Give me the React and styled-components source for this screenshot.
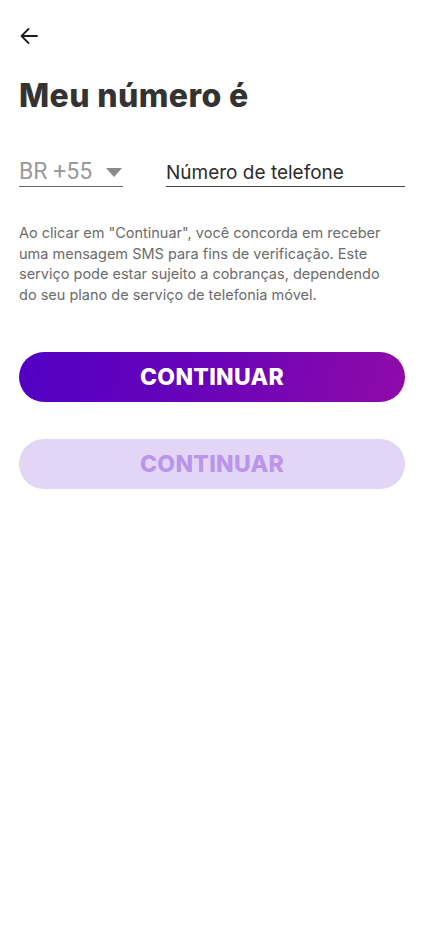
import styled, { createGlobalStyle } from "styled-components";

const GlobalStyle = createGlobalStyle`
  body {
    margin: 0;
    background: #ffffff;
    font-family: "Inter", "Lato", sans-serif;
  }
`;

export default function App() {
  return (
    <>
      <GlobalStyle />
      <Page>
        <BackButton type="button" aria-label="Voltar">
          <svg width="20" height="20" viewBox="0 0 20 20" fill="none">
            <path
              d="M18 10H2.5M9.5 3L2.5 10L9.5 17"
              stroke="#1f1f1f"
              strokeWidth="1.8"
              strokeLinecap="round"
              strokeLinejoin="round"
            />
          </svg>
        </BackButton>
        <Title>Meu número é</Title>
        <InputRow>
          <CountrySelect>
            <CountryText>BR +55</CountryText>
            <Caret />
          </CountrySelect>
          <PhoneField>Número de telefone</PhoneField>
        </InputRow>
        <Notice>
          Ao clicar em "Continuar", você concorda em receber uma mensagem SMS
          para fins de verificação. Este serviço pode estar sujeito a
          cobranças, dependendo do seu plano de serviço de telefonia móvel.
        </Notice>
        <Buttons>
          <ContinueButton type="button">CONTINUAR</ContinueButton>
          <ContinueButton type="button" $disabled>
            CONTINUAR
          </ContinueButton>
        </Buttons>
      </Page>
    </>
  );
}

const Page = styled.div`
  min-height: 932px;
  padding: 26px 25px 0 19px;
  box-sizing: border-box;
  display: flex;
  flex-direction: column;
`;

const BackButton = styled.button`
  border: none;
  background: none;
  padding: 0;
  width: 20px;
  height: 20px;
  display: flex;
  cursor: pointer;
`;

const Title = styled.h1`
  margin: 30px 0 0;
  font-size: 32px;
  font-weight: 800;
  color: #333333;
  letter-spacing: 0.4px;
  line-height: 40px;
`;

const InputRow = styled.div`
  display: flex;
  align-items: flex-end;
  gap: 43px;
  margin-top: 43px;
`;

const CountrySelect = styled.div`
  width: 104px;
  display: flex;
  align-items: center;
  justify-content: space-between;
  border-bottom: 1.5px solid #6a6a6a;
  padding-bottom: 1px;
`;

const CountryText = styled.span`
  font-family: "Roboto", sans-serif;
  font-size: 23px;
  color: #9a9a9a;
  line-height: 26px;
`;

const Caret = styled.span`
  width: 0;
  height: 0;
  border-left: 8px solid transparent;
  border-right: 8px solid transparent;
  border-top: 9px solid #8a8a8a;
  margin-right: 1px;
`;

const PhoneField = styled.div`
  flex: 1;
  font-size: 19px;
  color: #2c2c2c;
  border-bottom: 1.5px solid #444;
  line-height: 24px;
  padding-bottom: 1px;
`;

const Notice = styled.p`
  margin: 36px 0 0;
  max-width: 372px;
  font-size: 14.5px;
  line-height: 20.7px;
  color: #6b6b6b;
`;

const Buttons = styled.div`
  display: flex;
  flex-direction: column;
  gap: 37px;
  margin-top: 46px;
`;

const ContinueButton = styled.button`
  height: 50px;
  border: none;
  border-radius: 25px;
  font-family: "Inter", sans-serif;
  font-size: 23px;
  font-weight: 800;
  letter-spacing: 0.3px;
  color: ${(p) => (p.$disabled ? "#bb95ea" : "#ffffff")};
  background: ${(p) =>
    p.$disabled
      ? "#e3d5f5"
      : "linear-gradient(100deg, #5200c4 0%, #6a03b8 50%, #900aa8 100%)"};
`;
